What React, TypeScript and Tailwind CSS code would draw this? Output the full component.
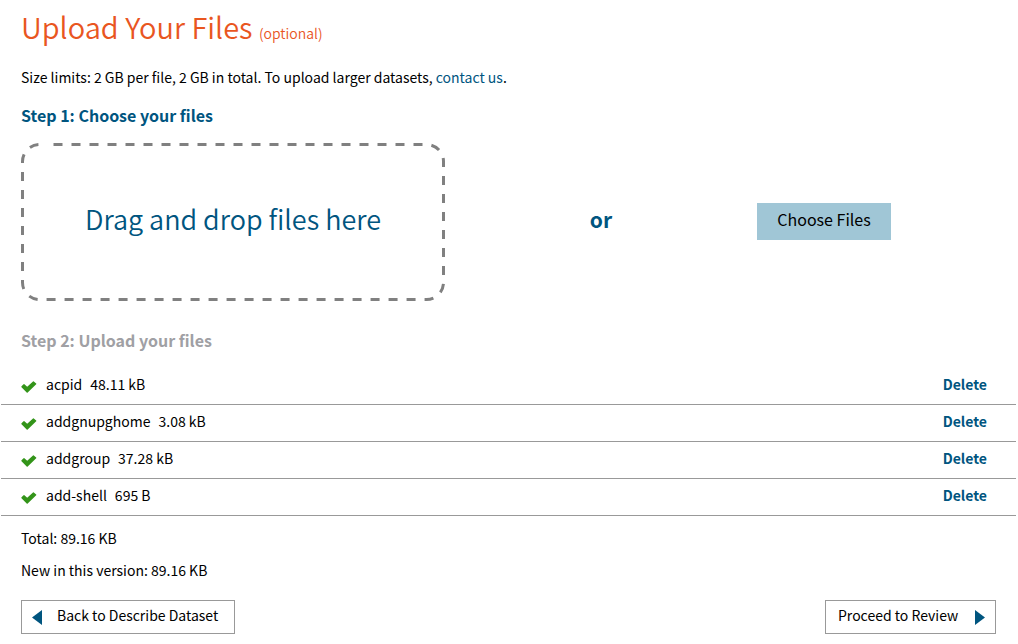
const files = [
  { name: 'acpid', size: '48.11 kB' },
  { name: 'addgnupghome', size: '3.08 kB' },
  { name: 'addgroup', size: '37.28 kB' },
  { name: 'add-shell', size: '695 B' },
];

// The outline opens with a wider gap, then repeats an even dash all the way round.
const outlineDashes = `0 14 ${Array(62).fill('9 9').join(' ')}`;

function CheckIcon() {
  return (
    <svg className="mt-[5px] h-3 w-4 shrink-0" viewBox="0 0 16 12" aria-hidden="true">
      <path
        d="M.5 5.3 2.6 3.2Q3 2.8 3.4 3.2L6.2 5.8 12 .4Q12.4 0 12.8.4L15.2 2.5Q15.5 2.9 15.2 3.3L6.7 11.6Q6.2 12 5.7 11.6L.5 6.3Q.1 5.8.5 5.3Z"
        fill="#339419"
      />
    </svg>
  );
}

function Arrow({ direction }: { direction: 'left' | 'right' }) {
  return (
    <svg className="mt-1 h-[15px] w-[10px] shrink-0" viewBox="0 0 10 15" aria-hidden="true">
      <path d={direction === 'left' ? 'M10 0V15L0 7.5Z' : 'M0 0V15L10 7.5Z'} fill="#00557f" />
    </svg>
  );
}

export default function App() {
  return (
    <main className="bg-white pb-2 font-['Noto_Sans_CJK_SC','Noto_Sans',sans-serif] text-[14px] leading-5 text-black">
      <div className="pr-[22px] pl-[21px]">
        <h1 className="pt-[6px] text-[29px] leading-10 font-[350] text-[#e9561f]">
          Upload Your Files <small className="text-[14px]">(optional)</small>
        </h1>
        <p className="mt-[14px]">
          Size limits: 2 GB per file, 2 GB in total. To upload larger datasets,{' '}
          <a href="#contact" className="text-[#00557f]">contact us</a>.
        </p>
        <h2 className="mt-4 text-[16px] leading-6 font-bold text-[#00557f]">Step 1: Choose your files</h2>
        <div className="mt-4 flex items-center justify-between pr-[105px]">
          <div className="relative flex h-[158px] w-[424px] items-center justify-center pb-[6px]">
            <svg className="absolute inset-0 size-full" aria-hidden="true">
              <rect
                x="1.5"
                y="1.5"
                rx="17"
                className="h-[calc(100%-3px)] w-[calc(100%-3px)]"
                fill="none"
                stroke="#808080"
                strokeWidth="3"
                strokeDasharray={outlineDashes}
              />
            </svg>
            <p className="text-[27px] leading-10 font-[350] text-[#00557f]">Drag and drop files here</p>
          </div>
          <span className="pb-[6px] text-[21px] leading-8 font-bold text-[#00557f]">or</span>
          <button type="button" className="mb-[2px] h-[37px] w-[134px] bg-[#a0c6d6] pb-1 text-[16px] leading-6">
            Choose Files
          </button>
        </div>
        <h2 className="mt-[27px] text-[16px] leading-6 font-bold text-[#a0a0a4]">Step 2: Upload your files</h2>
      </div>
      <ul className="mt-4 mr-[2px] ml-px">
        {files.map((file) => (
          <li key={file.name} className="flex h-[37px] items-center border-b border-[#999999] pr-[29px] pb-1 pl-5">
            <CheckIcon />
            <span className="ml-[9px]">{file.name}</span>
            <span className="ml-2">{file.size}</span>
            <button type="button" aria-label={`Delete ${file.name}`} className="ml-auto font-bold text-[#00557f]">
              Delete
            </button>
          </li>
        ))}
      </ul>
      <div className="pr-[22px] pl-[21px]">
        <p className="mt-3">Total: 89.16 KB</p>
        <p className="mt-3">New in this version: 89.16 KB</p>
        <div className="mt-5 flex justify-between">
          <button type="button" className="flex h-[34px] w-[214px] items-center gap-[15px] border border-[#999999] pb-1 pl-[10px]">
            <Arrow direction="left" />
            Back to Describe Dataset
          </button>
          <button type="button" className="flex h-[34px] w-[171px] items-center justify-between border border-[#999999] pr-[10px] pb-1 pl-3">
            Proceed to Review
            <Arrow direction="right" />
          </button>
        </div>
      </div>
    </main>
  );
}
